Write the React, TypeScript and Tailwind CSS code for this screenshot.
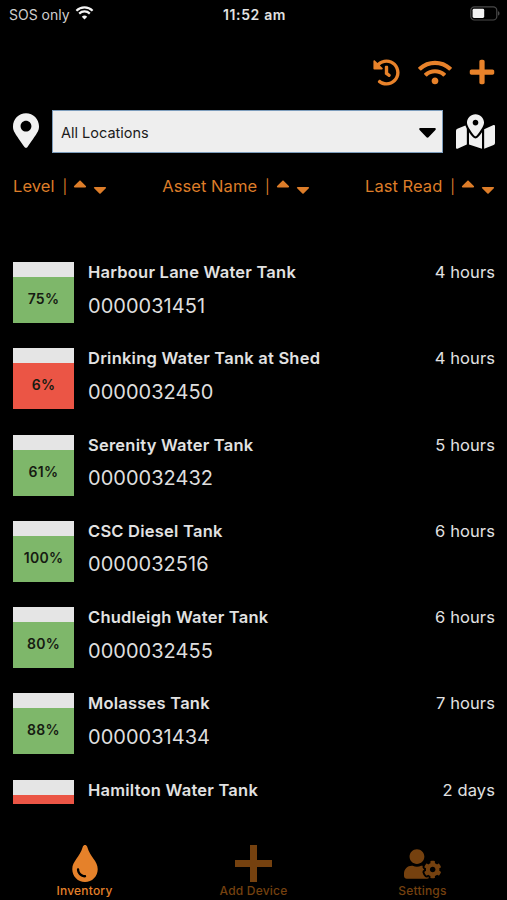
import {
  FaCaretDown,
  FaCaretUp,
  FaHistory,
  FaMapMarkedAlt,
  FaMapMarkerAlt,
  FaPlus,
  FaTint,
  FaUserCog,
  FaWifi,
} from "react-icons/fa";

interface Tank {
  name: string;
  serial?: string;
  level?: number;
  lastRead: string;
  low?: boolean;
}

const tanks: Tank[] = [
  { name: "Harbour Lane Water Tank", serial: "0000031451", level: 75, lastRead: "4 hours" },
  { name: "Drinking Water Tank at Shed", serial: "0000032450", level: 6, lastRead: "4 hours", low: true },
  { name: "Serenity Water Tank", serial: "0000032432", level: 61, lastRead: "5 hours" },
  { name: "CSC Diesel Tank", serial: "0000032516", level: 100, lastRead: "6 hours" },
  { name: "Chudleigh Water Tank", serial: "0000032455", level: 80, lastRead: "6 hours" },
  { name: "Molasses Tank", serial: "0000031434", level: 88, lastRead: "7 hours" },
  { name: "Hamilton Water Tank", lastRead: "2 days", low: true },
];

const StatusBar = () => (
  <div className="flex h-7 items-center justify-between pr-[7px] pl-[9px] text-[14px] text-[#cfcfcf]">
    <div className="flex w-40 items-center gap-[5px]">
      <span>SOS only</span>
      <svg width="19" height="14" viewBox="0 0 18 14" fill="none" stroke="#f5f5f5" strokeWidth="2.2" className="-mt-0.5">
        <path d="M0.9 4.7a11.6 11.6 0 0 1 16.2 0" />
        <path d="M3.7 7.6a7.6 7.6 0 0 1 10.6 0" />
        <path d="M9 13.5L6.3 10.8a3.9 3.9 0 0 1 5.4 0z" fill="#f5f5f5" stroke="none" />
      </svg>
    </div>
    <span className="text-center font-semibold tracking-[0.65px] text-[#e2e2e2]">11:52 am</span>
    <div className="flex w-40 justify-end">
      <svg width="30" height="15" viewBox="0 0 30 15" className="-mt-0.5">
        <rect x="0.8" y="0.8" width="26" height="13.2" rx="3.6" fill="none" stroke="#4a4a4a" strokeWidth="1.2" />
        <rect x="2.6" y="2.8" width="11.6" height="9.2" rx="1.4" fill="#f4f4f4" />
        <path d="M28 5.2c2 .6 2 3.8 0 4.4z" fill="#4a4a4a" />
      </svg>
    </div>
  </div>
);

const SortHeader = ({ label }: { label: string }) => (
  <div className="flex h-6 items-center">
    <span className="text-[16.5px] tracking-[0.05px]">{label}</span>
    <span className="ml-2 text-[14px]">|</span>
    <FaCaretUp className="-mt-1.5 ml-1.5 h-[21px] w-[14px]" />
    <FaCaretDown className="mt-1.5 ml-[6px] h-[21px] w-[14px]" />
  </div>
);

const TankRow = ({ tank }: { tank: Tank }) => (
  <li className="flex h-[86.3px] shrink-0">
    <div className="h-[61px] w-[61px] shrink-0 bg-[#e5e5e5] pt-[15px]">
      <div
        className={`flex h-[46px] items-center justify-center pb-[3px] text-[14px] font-semibold tracking-[0.3px] text-[#161b12] ${
          tank.low ? "bg-[#eb5545]" : "bg-[#7eb76a]"
        }`}
      >
        {tank.level !== undefined && `${tank.level}%`}
      </div>
    </div>
    <div className="ml-3.5 flex-1">
      <div className="flex justify-between text-[16.5px] leading-5 text-[#e2e2e2]">
        <span className="font-semibold tracking-[0.23px]">{tank.name}</span>
        <span className="tracking-[0.1px]">{tank.lastRead}</span>
      </div>
      {tank.serial && (
        <div className="mt-[9.5px] text-[20px] leading-7 tracking-[0.03px] text-[#dedede]">{tank.serial}</div>
      )}
    </div>
  </li>
);

const App = () => (
  <div className="flex h-[900px] w-[507px] flex-col overflow-hidden bg-black font-['Inter','Liberation_Sans',sans-serif]">
    <StatusBar />

    <div className="mt-[30px] flex h-7 items-center justify-end pr-[11px] text-[#e8822a]">
      <FaHistory className="size-[27px]" />
      <FaWifi className="ml-[18px] h-[27px] w-[34px]" />
      <FaPlus className="ml-4 size-[28px]" />
    </div>

    <div className="mt-[24px] flex h-[43px] items-center px-3 text-[#f1f1f1]">
      <FaMapMarkerAlt className="-mt-0.5 ml-px h-[35px] w-[26px]" />
      <button className="ml-[13px] flex h-[43px] w-[391px] items-center justify-between border border-[#7d9dbc] bg-[#eeeeee] pr-1.5 pl-2 text-[14.5px] text-[#1b1b1b]">
        <span className="mt-0.5">All Locations</span>
        <svg width="17" height="10" viewBox="0 0 17 10" className="mt-[3px]">
          <path d="M1.4 0h14.2c1.1 0 1.6 1.1.8 1.9L9.5 9.3c-.5.6-1.5.6-2 0L.6 1.9C-.2 1.1.3 0 1.4 0z" fill="#000" />
        </svg>
      </button>
      <FaMapMarkedAlt className="ml-[13px] h-[35px] w-[39px]" />
    </div>

    <div className="mt-[21px] flex h-6 justify-between pr-3 pl-[13px] text-[#dd7d29]">
      <SortHeader label="Level" />
      <SortHeader label="Asset Name" />
      <SortHeader label="Last Read" />
    </div>

    <ul className="mt-[64px] flex h-[542px] flex-col overflow-hidden pr-3 pl-[13px]">
      {tanks.map((tank) => (
        <TankRow key={tank.name} tank={tank} />
      ))}
    </ul>

    <nav className="mt-[41px] grid h-[55px] grid-cols-3 text-[12px] font-medium tracking-[0.2px] text-[#75410f]">
      <div className="flex flex-col items-center text-[#e5812a]">
        <FaTint className="h-[37px] w-[26px] shrink-0" />
        <span className="mt-px leading-4">Inventory</span>
      </div>
      <div className="flex flex-col items-center">
        <svg className="shrink-0" width="37" height="37" viewBox="0 0 37 37" fill="currentColor">
          <path d="M15 0h7v15h15v7H22v15h-7V22H0v-7h15z" />
        </svg>
        <span className="mt-px leading-4">Add Device</span>
      </div>
      <div className="flex flex-col items-center">
        <FaUserCog className="my-[3.5px] h-[30px] w-[37px] shrink-0" />
        <span className="mt-px leading-4">Settings</span>
      </div>
    </nav>
  </div>
);

export default App;
